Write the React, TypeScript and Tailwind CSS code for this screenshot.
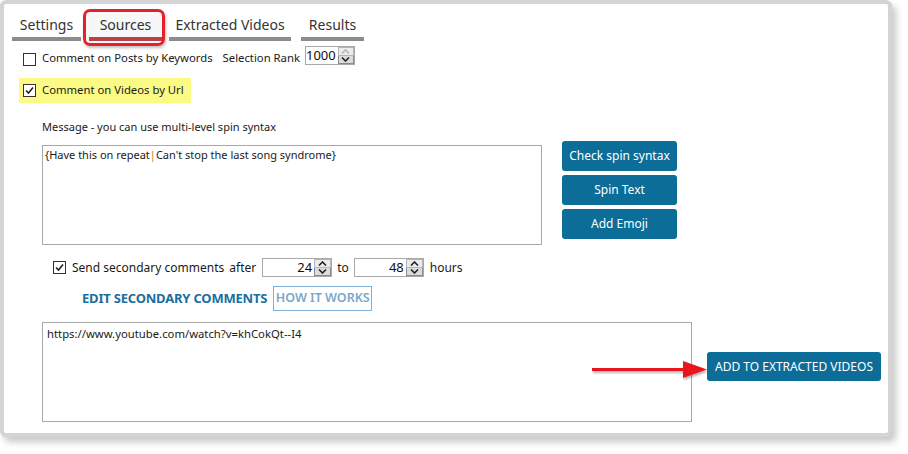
import React from "react";

const font = { fontFamily: '"Noto Sans", "Open Sans", sans-serif' };

function CheckBox({ checked }: { checked?: boolean }) {
  return (
    <div className="w-[13px] h-[13px] border border-[#333] bg-white flex items-center justify-center shrink-0">
      {checked && (
        <svg width="9" height="9" viewBox="0 0 9 9">
          <path d="M1 4.5 L3.5 7 L8 1.5" fill="none" stroke="#222" strokeWidth="1.6" />
        </svg>
      )}
    </div>
  );
}

function Arrow({ up, dim }: { up?: boolean; dim?: boolean }) {
  return (
    <svg width="9" height="5" viewBox="0 0 9 5">
      <path
        d={up ? "M1 4.5 L4.5 1 L8 4.5" : "M1 0.5 L4.5 4 L8 0.5"}
        fill="none"
        stroke={dim ? "#b8b8b8" : "#222"}
        strokeWidth="1.6"
      />
    </svg>
  );
}

function NumberBox({ value, width, upDim }: { value: string; width: string; upDim?: boolean }) {
  return (
    <div className={`${width} h-[19px] flex border border-[#a9a9a9] bg-white`}>
      <div className="flex-1 text-right pr-[2px] text-[13px] leading-[17px] text-[#111]">{value}</div>
      <div className="w-[17px] flex flex-col">
        <div className="flex-1 bg-[#ececec] border border-[#b5b5b5] flex items-center justify-center">
          <Arrow up dim={upDim} />
        </div>
        <div className="flex-1 bg-[#dcdcdc] border border-[#8a8a8a] border-t-0 flex items-center justify-center">
          <Arrow />
        </div>
      </div>
    </div>
  );
}

function BlueButton({ label, className }: { label: string; className: string }) {
  return (
    <button className={`${className} bg-[#0b6d98] text-white rounded-[3px] text-[12px] flex items-center justify-center`}>
      {label}
    </button>
  );
}

export default function App() {
  const tabs = [
    { name: "Settings", w: "w-[69px]" },
    { name: "Sources", w: "w-[73px]" },
    { name: "Extracted Videos", w: "w-[122px]" },
    { name: "Results", w: "w-[63px]" },
  ];

  return (
    <div className="w-[908px] h-[454px] bg-white" style={font}>
      <div className="w-[892px] h-[437px] border-[4px] border-[#d4d4d4] rounded-[6px] bg-white shadow-[4px_5px_7px_rgba(0,0,0,0.22)] relative text-[#1a1a1a]">
        {/* tabs */}
        <div className="flex items-end ml-[8px] gap-[8px]">
          {tabs.map((t, i) => (
            <div key={t.name} className={`${t.w} flex flex-col ${i === 2 ? "ml-[-1px]" : ""} ${i === 3 ? "ml-[2px]" : ""}`}>
              <div className="h-[26px] mt-[7px] flex items-center justify-center text-[14px] text-[#333]">{t.name}</div>
              <div className={`h-[4px] ${i === 1 ? "bg-[#c3434a]" : "bg-[#8c8c8c]"}`} />
            </div>
          ))}
        </div>
        {/* red highlight around Sources */}
        <div className="absolute left-[79px] top-[5px] w-[82px] h-[37px] border-[3px] border-[#e4202a] rounded-[7px] bg-[rgba(0,0,0,0.03)] shadow-[1px_2px_3px_rgba(0,0,0,0.25)]" />

        {/* keywords row */}
        <div className="flex items-end mt-[5px] ml-[19px] h-[20px] text-[11.3px] whitespace-nowrap">
          <CheckBox />
          <span className="ml-[6px] leading-[16px]">Comment on Posts by Keywords</span>
          <span className="ml-[10px] leading-[16px]">Selection Rank</span>
          <div className="ml-[5px] mb-[1px]">
            <NumberBox value="1000" width="w-[50px]" upDim />
          </div>
        </div>

        {/* url row */}
        <div className="ml-[15px] mt-[12px] w-[172px] h-[25px] bg-[#fafa84] flex items-center pl-[4px] text-[11.3px] whitespace-nowrap">
          <CheckBox checked />
          <span className="ml-[6px]">Comment on Videos by Url</span>
        </div>

        {/* message */}
        <div className="ml-[38px] mt-[16px] text-[11px] leading-[16px] whitespace-nowrap">Message - you can use multi-level spin syntax</div>
        <div className="flex ml-[38px] mt-[8px]">
          <div className="w-[500px] h-[100px] border border-[#a9a9a9] mt-[2px] px-[2px] pt-[1px] text-[11px] leading-[16px] whitespace-nowrap">
            {"{Have this on repeat"}
            <span className="text-[#d07a2a]">|</span>
            {"Can't stop the last song syndrome}"}
          </div>
          <div className="ml-[20px] flex flex-col gap-[4px] -mt-[2px]">
            <BlueButton label="Check spin syntax" className="w-[115px] h-[30px]" />
            <BlueButton label="Spin Text" className="w-[115px] h-[30px]" />
            <BlueButton label="Add Emoji" className="w-[115px] h-[30px]" />
          </div>
        </div>

        {/* secondary comments */}
        <div className="flex items-center ml-[49px] mt-[13px] h-[19px] text-[12px] whitespace-nowrap">
          <CheckBox checked />
          <span className="ml-[6px]">Send secondary comments</span>
          <span className="ml-[5px]">after</span>
          <div className="ml-[6px]"><NumberBox value="24" width="w-[70px]" /></div>
          <span className="ml-[5px]">to</span>
          <div className="ml-[5px]"><NumberBox value="48" width="w-[70px]" /></div>
          <span className="ml-[6px]">hours</span>
        </div>

        <div className="flex items-center ml-[78px] mt-[9px]">
          <span className="text-[13px] font-bold text-[#1a6fa0] tracking-[-0.2px]">EDIT SECONDARY COMMENTS</span>
          <div className="ml-[6px] w-[99px] h-[25px] border border-[#7fb0d6] flex items-center justify-center text-[12.5px] font-semibold text-[#78a8cc]">
            HOW IT WORKS
          </div>
        </div>

        {/* urls */}
        <div className="flex items-center ml-[38px] mt-[11px]">
          <div className="w-[650px] h-[100px] border border-[#a9a9a9] px-[4px] pt-[3px] text-[11.3px] leading-[16px]">
            https://www.youtube.com/watch?v=khCokQt--I4
          </div>
          <button className="ml-[15px] -mt-[11px] w-[174px] h-[29px] bg-[#0b6d98] text-white rounded-[3px] text-[12px]">
            ADD TO EXTRACTED VIDEOS
          </button>
        </div>

        {/* annotation arrow */}
        <svg className="absolute left-[586px] top-[355px]" width="120" height="22" viewBox="0 0 120 22">
          <defs>
            <filter id="sh" x="-10%" y="-50%" width="120%" height="200%">
              <feDropShadow dx="1" dy="2" stdDeviation="1.2" floodColor="#000" floodOpacity="0.3" />
            </filter>
          </defs>
          <g filter="url(#sh)">
            <rect x="2" y="9" width="94" height="3" fill="#e8151b" />
            <polygon points="93,2 117,10.5 93,19" fill="#e8151b" />
          </g>
        </svg>
      </div>
    </div>
  );
}
